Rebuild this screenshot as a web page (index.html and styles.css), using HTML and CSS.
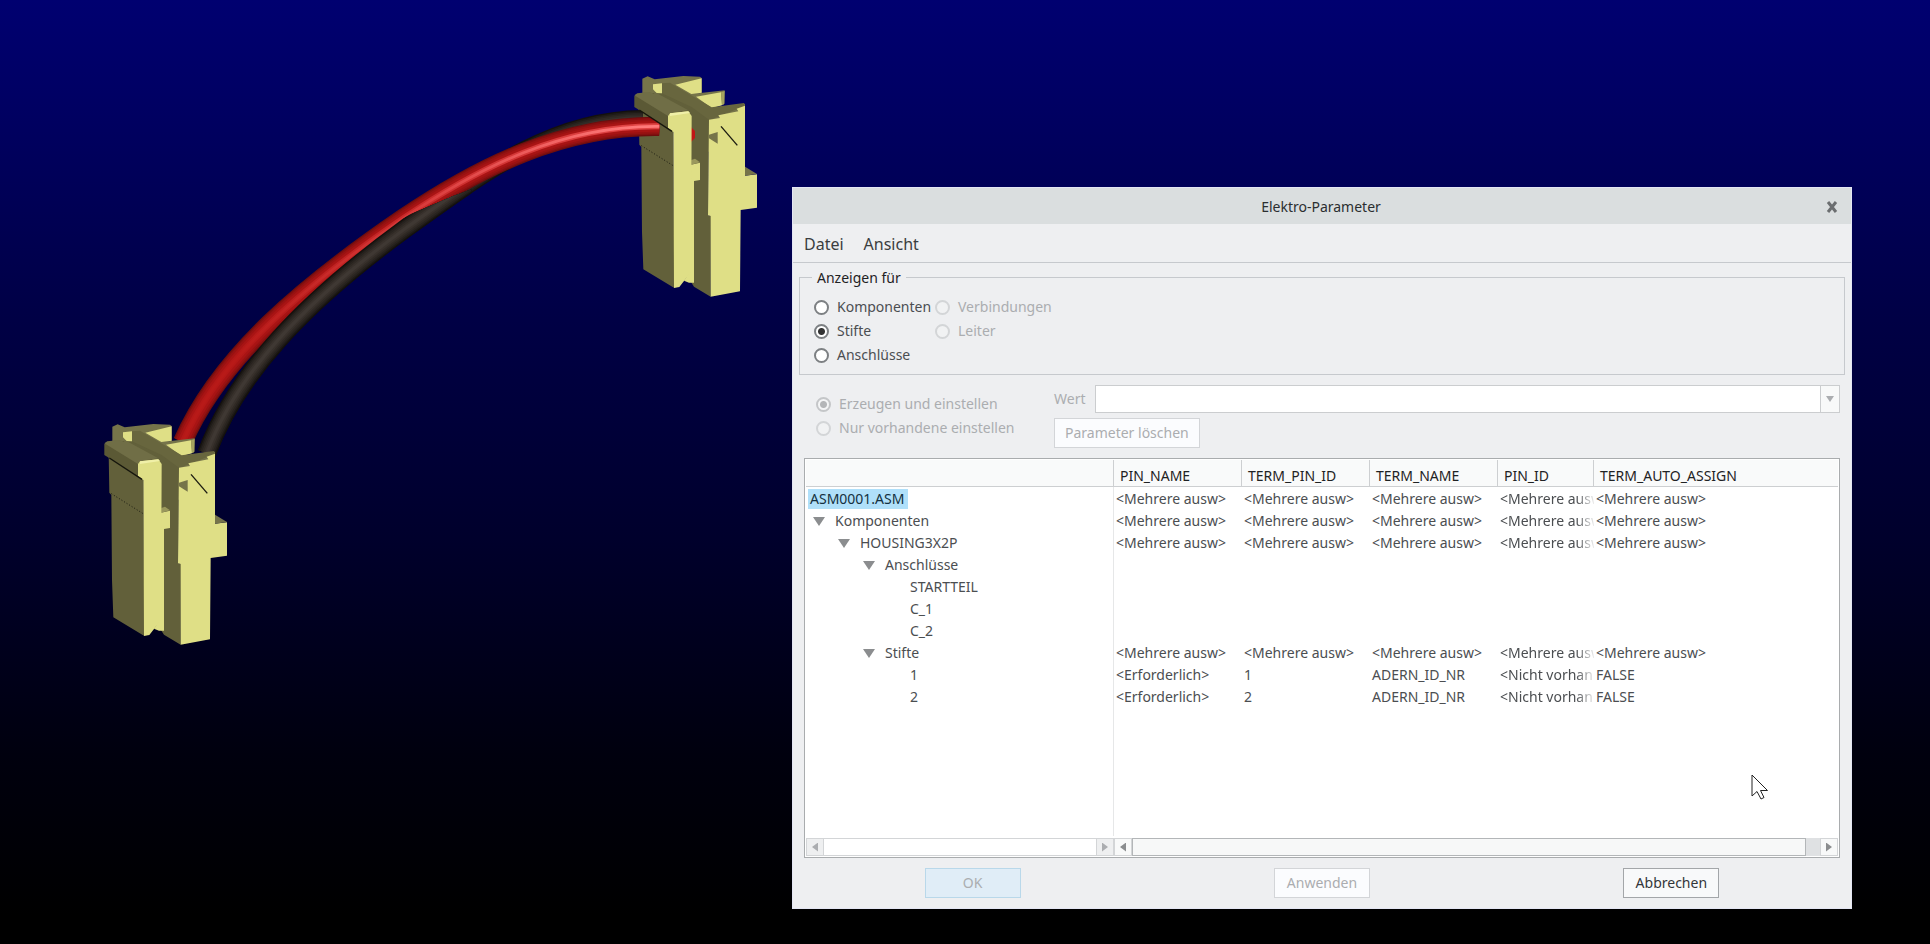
FILE: index.html
```
<!DOCTYPE html>
<html lang="de">
<head>
  <meta charset="UTF-8" />
  <title>Elektro-Parameter</title>
  <meta name="viewport" content="width=device-width, initial-scale=1" />
  <link rel="stylesheet" href="styles.css">
</head>
<body>

<main class="viewport">
  <!-- 3D model: two housings and a pair of wires -->
  <svg class="model" width="780" height="660" viewBox="0 0 780 660" aria-hidden="true">
    <defs>
      <g id="housing" transform="scale(.33333)">
        <path fill="#76744a" d="M67 80 83 73 104 82 190 72 240 74 245 78 245 122 215 126 314 115 314 155 275 170 375 155 375 200 267 300 67 180z"/>
        <path fill="#dfdf86" d="M99 97 126 94 126 140 99 112zM166 98 245 79 245 122 214 126z"/>
        <path fill="#dfdf86" d="M228 134 303 121 306 160 275 168z"/>
        <path fill="#a5a35f" d="M303 121 314 117 312 157 306 160z"/>
        <path fill="#68663e" d="M126 94 150 92 275 166 372 153 375 162 267 205 210 230 126 150z"/>
        <path fill="#62603a" d="M67 122 126 124 215 165 267 203 265 490 273 492 272 734 222 704 200 670 190 200z"/>
        <path fill="#dfdf86" d="M267 203 300 198 295 190 355 178 350 170 375 161 375 371 411 367 411 467 362 474 360 718 272 734 272 492 264 490z"/>
        <path fill="#76744a" d="M375 344 411 366 375 371z"/>
        <path fill="#76744a" d="M267 248 293 240 293 275 267 259z"/>
        <path stroke="#1a1a10" stroke-width="4" d="M303 223 352 280"/>
        <path fill="#62603a" d="M56 160 160 228 163 708 70 652 66 540 64 285 58 278z"/>
        <path fill="#dfdf86" d="M213 338 240 332 240 384 222 387 222 692 207 692 192 686 207 663z"/>
        <path fill="#9a985c" d="M214 324 225 320 240 331 214 338z"/>
        <path stroke="#1a1a10" stroke-width="3" stroke-dasharray="3 6" d="M64 281 158 340"/>
      </g>
      <g id="cap" transform="scale(.33333)">
        <path fill="#5b5935" d="M43 132 88 122 165 200 150 232 43 165z"/>
        <path fill="#706e46" d="M43 130 52 124 90 120 102 126 104 120 205 175 150 183 144 192z"/>
        <path fill="#dfdf86" d="M144 192 150 184 205 178 215 192 213 660 178 705 162 708 160 240 144 228z"/>
        <path fill="#f0f0a8" d="M150 184 205 178 210 183 150 192z"/>
        <path stroke="#15150c" stroke-width="4" fill="none" d="M58 174 156 238"/>
      </g>
      <path id="black" d="M110 1090C200 850 400 640 700 420C950 240 1150 90 1418 88"/>
      <path id="red" d="M38 1056C150 800 400 590 700 385C930 230 1180 105 1468 109"/>
      <clipPath id="front">
        <path d="M0 1120V200H700V384L724 371 850 318 905 298V1120z"/>
      </clipPath>
      <linearGradient id="shine" gradientUnits="userSpaceOnUse" x1="200" y1="800" x2="1400" y2="100">
        <stop offset="0" stop-color="#b41817"/>
        <stop offset=".5" stop-color="#c92a2a"/>
        <stop offset="1" stop-color="#e04444"/>
      </linearGradient>
      <linearGradient id="glint" gradientUnits="userSpaceOnUse" x1="200" y1="800" x2="1400" y2="100">
        <stop offset="0" stop-color="#b81a18"/>
        <stop offset=".5" stop-color="#d83a3a"/>
        <stop offset="1" stop-color="#ff7a7a"/>
      </linearGradient>
      <g id="blackwire">
        <use href="#black" stroke="#14110e" stroke-width="56"/>
        <use href="#black" stroke="#1f1b17" stroke-width="48"/>
        <use href="#black" stroke="#28231f" stroke-width="40"/>
        <use href="#black" stroke="#302a25" stroke-width="30"/>
        <use href="#black" stroke="#38312c" stroke-width="20"/>
        <use href="#black" stroke="#3f3833" stroke-width="10"/>
      </g>
    </defs>

    <use href="#housing" x="620" y="52"/>
    <g fill="none" transform="translate(170 90) scale(.33333)">
      <use href="#blackwire"/>
      <g>
        <use href="#red" stroke="#6e0e0e" stroke-width="58"/>
        <use href="#red" stroke="#861010" stroke-width="51"/>
        <use href="#red" stroke="#981212" stroke-width="43"/>
        <use href="#red" stroke="#a81414" stroke-width="32"/>
        <use href="#red" stroke="url(#shine)" stroke-width="18"/>
        <use href="#red" stroke="url(#glint)" stroke-width="8"/>
      </g>
      <g clip-path="url(#front)"><use href="#blackwire"/></g>
    </g>
    <use href="#housing" x="90" y="400"/>
    <path fill="#c01616" d="M691 127 695 131 695 138 691 142z"/>
    <use href="#cap" x="620" y="52"/>
    <use href="#cap" x="90" y="400"/>
  </svg>

  <section class="dialog" role="dialog" aria-labelledby="dialog-title">
    <header class="titlebar">
      <h1 id="dialog-title">Elektro-Parameter</h1>
      <button type="button" class="close" aria-label="Schließen">
        <svg width="12" height="12" viewBox="0 0 12 12"><path d="M2 1 10 11M10 1 2 11" stroke="#6b6e70" stroke-width="3"/></svg>
      </button>
    </header>

    <nav class="menubar">
      <a href="#">Datei</a>
      <a href="#">Ansicht</a>
    </nav>

    <form>
      <fieldset class="show-for">
        <legend>Anzeigen für</legend>
        <div class="radio-grid">
          <label><input type="radio" name="show" />Komponenten</label>
          <label class="off"><input type="radio" name="show" disabled />Verbindungen</label>
          <label><input type="radio" name="show" checked />Stifte</label>
          <label class="off"><input type="radio" name="show" disabled />Leiter</label>
          <label><input type="radio" name="show" />Anschlüsse</label>
        </div>
      </fieldset>

      <div class="edit-row">
        <div class="mode">
          <label class="off"><input type="radio" name="mode" checked disabled />Erzeugen und einstellen</label>
          <label class="off"><input type="radio" name="mode" disabled />Nur vorhandene einstellen</label>
        </div>
        <div class="value">
          <div class="value-line">
            <label class="off" for="wert">Wert</label>
            <div class="combo">
              <select id="wert" disabled><option></option></select>
              <span class="combo-arrow"><i class="tri down"></i></span>
            </div>
          </div>
          <button type="button" class="btn" disabled>Parameter löschen</button>
        </div>
      </div>

      <div class="table-box">
        <table class="params">
          <colgroup>
            <col class="c-tree"><col class="c-name"><col class="c-name"><col class="c-name"><col class="c-id"><col>
          </colgroup>
          <thead>
            <tr>
              <th></th>
              <th>PIN_NAME</th>
              <th>TERM_PIN_ID</th>
              <th>TERM_NAME</th>
              <th>PIN_ID</th>
              <th>TERM_AUTO_ASSIGN</th>
            </tr>
          </thead>
          <tbody>
            <tr><td class="root"><span>ASM0001.ASM</span></td><td>&lt;Mehrere ausw&gt;</td><td>&lt;Mehrere ausw&gt;</td><td>&lt;Mehrere ausw&gt;</td><td class="cut">&lt;Mehrere ausw&gt;</td><td>&lt;Mehrere ausw&gt;</td></tr>
            <tr><td class="l1"><i class="tri"></i>Komponenten</td><td>&lt;Mehrere ausw&gt;</td><td>&lt;Mehrere ausw&gt;</td><td>&lt;Mehrere ausw&gt;</td><td class="cut">&lt;Mehrere ausw&gt;</td><td>&lt;Mehrere ausw&gt;</td></tr>
            <tr><td class="l2"><i class="tri"></i>HOUSING3X2P</td><td>&lt;Mehrere ausw&gt;</td><td>&lt;Mehrere ausw&gt;</td><td>&lt;Mehrere ausw&gt;</td><td class="cut">&lt;Mehrere ausw&gt;</td><td>&lt;Mehrere ausw&gt;</td></tr>
            <tr><td class="l3"><i class="tri"></i>Anschlüsse</td><td></td><td></td><td></td><td></td><td></td></tr>
            <tr><td class="l4">STARTTEIL</td><td></td><td></td><td></td><td></td><td></td></tr>
            <tr><td class="l4">C_1</td><td></td><td></td><td></td><td></td><td></td></tr>
            <tr><td class="l4">C_2</td><td></td><td></td><td></td><td></td><td></td></tr>
            <tr><td class="l3"><i class="tri"></i>Stifte</td><td>&lt;Mehrere ausw&gt;</td><td>&lt;Mehrere ausw&gt;</td><td>&lt;Mehrere ausw&gt;</td><td class="cut">&lt;Mehrere ausw&gt;</td><td>&lt;Mehrere ausw&gt;</td></tr>
            <tr><td class="l4">1</td><td>&lt;Erforderlich&gt;</td><td>1</td><td>ADERN_ID_NR</td><td class="cut">&lt;Nicht vorhan</td><td>FALSE</td></tr>
            <tr><td class="l4">2</td><td>&lt;Erforderlich&gt;</td><td>2</td><td>ADERN_ID_NR</td><td class="cut">&lt;Nicht vorhan</td><td>FALSE</td></tr>
            <tr class="rest"><td></td><td></td><td></td><td></td><td></td><td></td></tr>
          </tbody>
        </table>
        <div class="scrollbars">
          <div class="scroll tree-scroll">
            <button type="button" disabled aria-label="Links"><i class="tri left"></i></button>
            <span class="track"></span>
            <button type="button" disabled aria-label="Rechts"><i class="tri right"></i></button>
          </div>
          <div class="scroll data-scroll">
            <button type="button" aria-label="Links"><i class="tri left"></i></button>
            <span class="track"><span class="thumb"></span></span>
            <button type="button" aria-label="Rechts"><i class="tri right"></i></button>
          </div>
        </div>
      </div>

      <footer class="actions">
        <button type="button" class="btn primary" disabled>OK</button>
        <button type="button" class="btn" disabled>Anwenden</button>
        <button type="button" class="btn">Abbrechen</button>
      </footer>
    </form>
  </section>

  <svg class="cursor" width="18" height="27" viewBox="0 0 18 27" aria-hidden="true">
    <path d="M1 1V22L6 17.500 10 25 13 23.500 9.500 16.500H16.500z" fill="#fff" stroke="#222" stroke-width="1"/>
  </svg>
</main>

</body>
</html>
```
FILE: styles.css
```
* {
  box-sizing: border-box;
}
body {
  margin: 0;
  font-family: "Noto Sans", "Open Sans", sans-serif;
  font-size: 14px;
  line-height: 20px;
  color: #4b4e51;
}
.viewport {
  position: relative;
  min-height: 100vh;
  overflow: hidden;
  background: linear-gradient(#000070 0%, #000064 10%, #000046 33%, #00002c 57%, #00000e 80%, #000 97%);
}
.model {
  position: absolute;
  left: 0;
  top: 0;
}

/* dialog window */
.dialog {
  position: absolute;
  left: 792px;
  right: 78px;
  top: 187px;
  background: #eeeff1;
  border: 1px solid #e4e6f4;
}
.titlebar {
  display: flex;
  align-items: center;
  height: 36px;
  padding: 2px 12px 0 24px;
  background: #dadedf;
}
h1 {
  flex: 1;
  margin: 0;
  font-size: 14px;
  font-weight: normal;
  text-align: center;
  color: #2b2e30;
}
.close {
  display: flex;
  padding: 0;
  width: 14px;
  justify-content: center;
  border: 0;
  background: none;
}
.menubar {
  display: flex;
  align-items: center;
  gap: 20px;
  height: 39px;
  padding: 2px 11px 0;
  border-bottom: 1px solid #c6c9cd;
}
.menubar a {
  font-size: 16px;
  color: #3a3d40;
  text-decoration: none;
}

.show-for {
  margin: 3px 6px 0;
  padding: 7px 14px 7px;
  border: 1px solid #c6c9cd;
}
legend {
  margin-left: -2px;
  padding: 2px 5px 0;
  color: #1f2224;
}
.radio-grid {
  display: grid;
  grid-template-columns: 121px auto;
  justify-content: start;
}
.radio-grid label, .mode label {
  display: flex;
  align-items: center;
  gap: 8px;
  height: 24px;
  white-space: nowrap;
}
.off {
  color: #abadb0;
}
input[type="radio"] {
  appearance: none;
  flex: none;
  width: 15px;
  height: 15px;
  margin: 0;
  border: 2px solid #7d8083;
  border-radius: 50%;
  background: #fff;
}
input[type="radio"]:checked {
  background: radial-gradient(circle, #333 3px, #fff 4px);
}
input[type="radio"]:disabled {
  border-color: #d3d5d7;
  background: #f1f2f3;
}
input[type="radio"]:disabled:checked {
  border-color: #c4c6c8;
  background: radial-gradient(circle, #b4b6b8 3px, #f4f5f6 4px);
}

.edit-row {
  display: flex;
  padding: 10px 11px;
}
.mode {
  width: 238px;
  margin-left: 12px;
  padding-top: 7px;
}
.value {
  flex: 1;
}
.value-line {
  display: flex;
  align-items: center;
  gap: 10px;
  margin-bottom: 5px;
}
.value-line label {
  width: 31px;
}
.combo {
  position: relative;
  flex: 1;
  height: 28px;
}
.combo select {
  appearance: none;
  display: block;
  width: 100%;
  height: 28px;
  border: 1px solid #cbcdcf;
  border-radius: 0;
  background: #fff;
  opacity: 1;
}
.combo-arrow {
  position: absolute;
  top: 1px;
  right: 1px;
  bottom: 1px;
  width: 19px;
  display: flex;
  align-items: center;
  justify-content: center;
  border-left: 1px solid #cbcdcf;
  background: #f8f9f9;
}
.btn {
  height: 30px;
  padding: 0 10px;
  font: inherit;
  color: #333639;
  border: 1px solid #a3a6a9;
  background: #f8f9fa;
}
.btn:disabled {
  color: #abadb0;
  border-color: #d3d5d8;
  background: #fbfcfe;
}
.btn.primary {
  border-color: #b9d8ea;
  background: #e0edf7;
}

/* triangles of the tree, the combo box and the scroll bars */
.tri {
  display: inline-block;
  width: 12px;
  height: 9px;
  background: #8b8d8f;
  clip-path: polygon(0 0, 100% 0, 50% 100%);
}
.tri.down {
  width: 8px;
  height: 6px;
  background: #abadb0;
}
.tri.left, .tri.right {
  width: 6px;
  height: 9px;
}
.scroll button:disabled .tri {
  background: #abadb0;
}
.tri.left {
  clip-path: polygon(100% 0, 100% 100%, 0 50%);
}
.tri.right {
  clip-path: polygon(0 0, 100% 50%, 0 100%);
}

.table-box {
  margin: 0 11px;
  padding: 1px;
  border: 1px solid #a9acae;
  background: #fff;
}
.params {
  width: 100%;
  height: 376px;
  table-layout: fixed;
  border-collapse: separate;
  border-spacing: 0;
}
.c-tree {
  width: 308px;
}
.c-name {
  width: 128px;
}
.c-id {
  width: 96px;
}
th {
  height: 27px;
  padding: 6px 0 0 6px;
  font-weight: normal;
  text-align: left;
  color: #1f2224;
  background: #f9fafa;
  border-right: 1px solid #cdcfd1;
  border-bottom: 1px solid #cdcfd1;
  line-height: 20px;
}
th:last-child {
  border-right: 0;
}
td {
  height: 22px;
  padding: 2px 0 0 2px;
  line-height: 20px;
  white-space: nowrap;
  overflow: hidden;
}
td:first-child {
  border-right: 1px solid #e6e7e8;
}
.rest td {
  height: auto;
}
.root span {
  display: block;
  width: 100px;
  padding-left: 2px;
  color: #143040;
  background: #b0e0fa;
}
.l1 .tri, .l2 .tri, .l3 .tri {
  margin-right: 10px;
}
td.l1 {
  padding-left: 7px;
}
td.l2 {
  padding-left: 32px;
}
td.l3 {
  padding-left: 57px;
}
td.l4 {
  padding-left: 104px;
}
.cut {
  -webkit-mask-image: linear-gradient(to right, #000 78px, transparent 98px);
  mask-image: linear-gradient(to right, #000 78px, transparent 98px);
}

.scrollbars {
  display: flex;
  margin-top: 2px;
}
.scroll {
  display: flex;
  height: 18px;
  border: 1px solid #d3d5d7;
}
.tree-scroll {
  width: 308px;
}
.data-scroll {
  flex: 1;
}
.scroll button {
  display: flex;
  align-items: center;
  justify-content: center;
  width: 16px;
  padding: 0;
  border: 0;
  background: #f8f9f9;
}
.scroll button:disabled {
  background: #eeeff0;
}
.track {
  flex: 1;
  border: solid #d3d5d7;
  border-width: 0 1px;
}
.data-scroll .track {
  margin: -1px 0;
  background: #dfe1e3;
}
.thumb {
  display: block;
  width: 98%;
  height: 18px;
  border: 1px solid #b3b6b8;
  background: #f7f8f8;
}

.actions {
  display: grid;
  grid-template-columns: repeat(3, 1fr);
  justify-items: center;
  padding: 10px 5px;
}
.actions .btn {
  width: 96px;
}

.cursor {
  position: absolute;
  left: 1751px;
  top: 774px;
}
```
